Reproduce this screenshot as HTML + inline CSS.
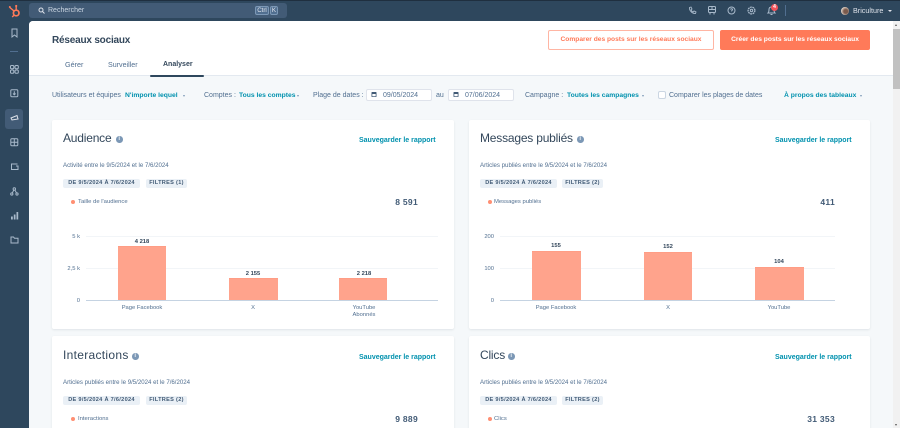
<!DOCTYPE html>
<html lang="fr"><head><meta charset="utf-8"><title>Réseaux sociaux</title>
<style>
html,body{margin:0;padding:0;width:900px;height:428px;overflow:hidden;background:#2e475d}
body{position:relative;font-family:"Liberation Sans",sans-serif;color:#33475b;filter:blur(.25px)}
*{box-sizing:border-box}
.a,.t{position:absolute}
.t{white-space:nowrap;line-height:10px;height:10px}
.c{transform:translateX(-50%)}
.r{transform:translateX(-100%)}
.link{color:#0091ae;font-weight:bold}
.lab{color:#516f90;font-size:7px}
.card{position:absolute;background:#fff;border-radius:2px;box-shadow:0 1px 2px rgba(45,62,80,.1);width:402px;height:209px}
.h{font-size:12px;color:#33475b;line-height:16px;height:16px;letter-spacing:-.2px}
.info{position:absolute;width:6.500px;height:6.500px;border-radius:50%;background:#7c98b6;color:#fff;font-size:5px;line-height:6.500px;text-align:center;font-weight:bold}
.tag{position:absolute;background:#eaf0f6;border-radius:2px;height:9px;font-size:5.600px;line-height:9px;font-weight:bold;color:#425b76;text-align:center;letter-spacing:.3px}
.dot{position:absolute;width:4px;height:4px;border-radius:50%;background:#ff8f73}
.bar{position:absolute;background:#ffa38c;border-top:1px solid #ff9d85}
.grid{position:absolute;height:1px;background:#f2f5f8}
.base{position:absolute;height:1px;background:#c5d3e2}
.num{font-weight:bold;font-size:5.800px;color:#33475b}
.ax{font-size:5.800px;color:#516f90}
.big{font-weight:bold;font-size:8.500px;color:#425b76;letter-spacing:.3px}
svg{position:absolute;overflow:visible}
.s{fill:none;stroke:#a9bacb;stroke-width:1}
.date{position:absolute;background:#fff;border:1px solid #dfe3eb;border-radius:2px;height:12px;width:66px}
.caret{position:absolute;width:0;height:0;border-left:1.600px solid transparent;border-right:1.600px solid transparent;border-top:2px solid #7c98b6}
.f{top:90.500px}
.f.lab{font-size:7px}
.f.link{font-size:6.750px}
</style></head><body>
<!-- top bar -->
<div class="a" style="left:0;top:0;width:900px;height:1px;background:#1f2f3f"></div>
<div class="a" style="left:29px;top:3px;width:258px;height:15px;background:#425b76;border-radius:3px"></div>
<svg style="left:38px;top:7px" width="8" height="8" viewBox="0 0 8 8"><circle cx="3" cy="3" r="2" fill="none" stroke="#dfe3eb" stroke-width="1"/><path d="M4.500 4.500L6.500 6.500" stroke="#dfe3eb" stroke-width="1"/></svg>
<div class="t" style="left:48px;top:6px;font-size:7px;color:#cbd6e2">Rechercher</div>
<div class="a" style="left:255px;top:6px;width:14px;height:9px;border:1px solid #7c98b6;border-radius:2px;background:#516f90;color:#dfe3eb;font-size:6.200px;line-height:7px;text-align:center">Ctrl</div>
<div class="a" style="left:270px;top:6px;width:8px;height:9px;border:1px solid #7c98b6;border-radius:2px;background:#516f90;color:#dfe3eb;font-size:6.200px;line-height:7px;text-align:center">K</div>
<!-- logo -->
<svg style="left:8px;top:4px" width="14" height="14" viewBox="0 0 14 14"><circle cx="8.200" cy="9" r="2.800" fill="none" stroke="#ff7a59" stroke-width="1.700"/><path d="M8.200 6V2.600M6 7L2 3.600M6.200 11L4.200 13" stroke="#ff7a59" stroke-width="1.400"/><circle cx="8.200" cy="2" r="1.100" fill="#ff7a59"/><circle cx="1.800" cy="3" r="1" fill="#ff7a59"/></svg>
<!-- right top icons -->
<svg style="left:688px;top:6px" width="9" height="9" viewBox="0 0 9 9"><path d="M1.500 1.500L3 1l1 2-1 .8c.4 1 1.200 1.800 2.200 2.200l.8-1 2 1-.5 1.500C4.500 8 1 4.500 1.500 1.500z" fill="none" stroke="#a9bacb" stroke-width=".9"/></svg>
<svg style="left:708px;top:6px" width="8" height="9" viewBox="0 0 8 9"><rect x=".5" y=".5" width="7" height="6" rx="1" class="s"/><path d="M.5 3.500H7.500M4 .5V3.500M2 7V8.500M6 7V8.500" class="s"/></svg>
<svg style="left:727px;top:6px" width="9" height="9" viewBox="0 0 9 9"><circle cx="4.500" cy="4.500" r="3.500" class="s"/><path d="M3.500 3.500C3.700 2.500 5.500 2.500 5.500 3.600 5.500 4.400 4.500 4.400 4.500 5.400" class="s" stroke-width=".8"/></svg>
<svg style="left:747px;top:6px" width="9" height="9" viewBox="0 0 9 9"><circle cx="4.500" cy="4.500" r="3.400" fill="none" stroke="#a9bacb" stroke-width="1.300" stroke-dasharray="1.800 .6"/><circle cx="4.500" cy="4.500" r="1.200" class="s" stroke-width=".9"/></svg>
<svg style="left:767px;top:6px" width="9" height="10" viewBox="0 0 9 10"><path d="M1 7c1-1 1-2 1-3.500C2 2 3 1 4.500 1S7 2 7 3.500C7 5 7 6 8 7zM3.500 8.500h2" class="s"/></svg>
<div class="a" style="left:771px;top:4px;width:7px;height:7px;border-radius:50%;background:#f2545b;color:#fff;font-size:5px;font-weight:bold;line-height:7px;text-align:center">4</div>
<div class="a" style="left:785px;top:5px;width:1px;height:11px;background:#516f90"></div>
<div class="a" style="left:841px;top:7px;width:8px;height:8px;border-radius:50%;background:radial-gradient(circle at 60% 55%,#7a5a4c 30%,#e3d5c8 70%)"></div>
<div class="t" style="left:853px;top:6px;font-size:7.200px;color:#dfe3eb">Briculture</div>
<div class="caret" style="left:888px;top:10px;border-left-width:2px;border-right-width:2px;border-top:2.500px solid #dfe3eb"></div>
<!-- sidebar icons -->
<svg style="left:10px;top:28px" width="9" height="10" viewBox="0 0 9 10"><path d="M2 1h5v8L4.500 7 2 9z" class="s"/></svg>
<div class="a" style="left:10px;top:51px;width:8px;height:1px;background:#516f90"></div>
<svg style="left:10px;top:65px" width="9" height="9" viewBox="0 0 9 9"><rect x=".5" y=".5" width="3.300" height="3.300" rx="1" class="s"/><rect x="5" y=".5" width="3.300" height="3.300" rx="1" class="s"/><rect x=".5" y="5" width="3.300" height="3.300" rx="1" class="s"/><rect x="5" y="5" width="3.300" height="3.300" rx="1" class="s"/></svg>
<svg style="left:10px;top:89px" width="9" height="9" viewBox="0 0 9 9"><rect x=".8" y=".8" width="7" height="7" rx="1" class="s"/><path d="M4.300 2.300V5.500M3 4.500L4.300 5.800 5.600 4.500" class="s" stroke-width=".8"/></svg>
<div class="a" style="left:5px;top:109px;width:18px;height:20px;background:#425b76;border-radius:3px"></div>
<svg style="left:10px;top:114px" width="9" height="8" viewBox="0 0 9 8"><path d="M1 4L7 1.500 8 5 2 6z" fill="none" stroke="#dfe3eb" stroke-width="1"/></svg>
<svg style="left:10px;top:138px" width="9" height="9" viewBox="0 0 9 9"><rect x=".8" y=".8" width="7" height="7" rx="1" class="s"/><path d="M.8 4.300H7.800M4.300 .8V7.800" class="s" stroke-width=".7"/></svg>
<svg style="left:10px;top:163px" width="9" height="8" viewBox="0 0 9 8"><path d="M7.500 1H1.500v5.500h6.500V3H6" class="s"/></svg>
<svg style="left:10px;top:187px" width="9" height="9" viewBox="0 0 9 9"><circle cx="4.300" cy="2" r="1.200" class="s"/><circle cx="1.800" cy="7" r="1.100" class="s"/><circle cx="7" cy="7" r="1.100" class="s"/><path d="M3.700 3.200L2.300 6M5 3.200L6.500 6" class="s" stroke-width=".8"/></svg>
<svg style="left:10px;top:211px" width="9" height="9" viewBox="0 0 9 9"><path d="M1 8.500V5.500H2.800V8.500M3.800 8.500V3.500H5.500V8.500M6.500 8.500V1H8.200V8.500" fill="#a9bacb"/></svg>
<svg style="left:10px;top:236px" width="9" height="8" viewBox="0 0 9 8"><path d="M1 1h2.500l1 1.200H8V7H1z" class="s"/></svg>
<!-- main -->
<div class="a" style="left:29px;top:21px;width:864px;height:407px;background:#f5f8fa;border-top-left-radius:4px"></div>
<div class="a" style="left:29px;top:21px;width:864px;height:55px;background:#fff;border-bottom:1px solid #e3e9f0;border-top-left-radius:4px"></div>
<div class="a" style="left:893px;top:21px;width:7px;height:407px;background:#f1f1f1"></div>
<div class="a" style="left:893px;top:29px;width:7px;height:60px;background:#c1c1c1"></div>
<div class="a" style="left:895px;top:24px;width:0;height:0;border-left:1.500px solid transparent;border-right:1.500px solid transparent;border-bottom:2px solid #555"></div>
<div class="a" style="left:895px;top:424px;width:0;height:0;border-left:1.500px solid transparent;border-right:1.500px solid transparent;border-top:2px solid #555"></div>

<div class="t" style="left:52px;top:34px;height:14px;line-height:14px;font-size:10px;font-weight:bold;color:#33475b;letter-spacing:-.2px">Réseaux sociaux</div>
<div class="t" style="left:65px;top:60px;font-size:7.200px;color:#516f90">Gérer</div>
<div class="t" style="left:108px;top:60px;font-size:7.100px;color:#516f90">Surveiller</div>
<div class="t" style="left:163px;top:60px;font-size:7px;font-weight:bold;color:#33475b">Analyser</div>
<div class="a" style="left:150px;top:75px;width:54px;height:2px;background:#2e475d;border-radius:1px"></div>

<div class="a" style="left:548px;top:30px;width:166px;height:20px;border:1px solid #ffb5a3;border-radius:2px;background:#fff;color:#ff7a59;font-size:6.650px;font-weight:bold;line-height:18px;text-align:center;white-space:nowrap">Comparer des posts sur les réseaux sociaux</div>
<div class="a" style="left:720px;top:30px;width:150px;height:20px;border-radius:2px;background:#ff7a59;color:#fff;font-size:6.700px;font-weight:bold;line-height:20px;text-align:center;white-space:nowrap">Créer des posts sur les réseaux sociaux</div>

<!-- filters -->
<div class="t lab f" style="left:52px">Utilisateurs et équipes</div>
<div class="t link f" style="left:125px">N'importe lequel</div>
<div class="caret" style="left:183px;top:94.500px"></div>
<div class="t lab f" style="left:204px">Comptes :</div>
<div class="t link f" style="left:239px">Tous les comptes</div>
<div class="caret" style="left:297px;top:94.500px"></div>
<div class="t lab f" style="left:313px">Plage de dates :</div>
<div class="date" style="left:366px;top:89px"></div>
<svg style="left:371px;top:91px" width="7" height="7" viewBox="0 0 7 7"><rect x=".5" y="1" width="5" height="5" rx=".6" fill="#425b76"/><rect x="1.300" y="3" width="3.400" height="2.300" fill="#fff"/></svg>
<div class="t lab f" style="left:383px">09/05/2024</div>
<div class="t lab f" style="left:436px">au</div>
<div class="date" style="left:448px;top:89px"></div>
<svg style="left:453px;top:91px" width="7" height="7" viewBox="0 0 7 7"><rect x=".5" y="1" width="5" height="5" rx=".6" fill="#425b76"/><rect x="1.300" y="3" width="3.400" height="2.300" fill="#fff"/></svg>
<div class="t lab f" style="left:465px">07/06/2024</div>
<div class="t lab f" style="left:525px">Campagne :</div>
<div class="t link f" style="left:567px">Toutes les campagnes</div>
<div class="caret" style="left:642px;top:94.500px"></div>
<div class="a" style="left:658px;top:91px;width:8px;height:8px;border:1px solid #cbd6e2;border-radius:2px;background:#fff"></div>
<div class="t lab f" style="left:669px">Comparer les plages de dates</div>
<div class="t link f" style="left:784px">À propos des tableaux</div>
<div class="caret" style="left:860px;top:94.500px"></div>

<!-- card 1 -->
<div class="card" style="left:52px;top:120px"></div>
<div class="t h" style="left:63px;top:130px">Audience</div>
<div class="info" style="left:116px;top:136px">i</div>
<div class="t link" style="left:359px;top:136px;font-size:7px">Sauvegarder le rapport</div>
<div class="t lab" style="left:63px;top:161px;font-size:6.100px">Activité entre le 9/5/2024 et le 7/6/2024</div>
<div class="tag" style="left:63px;top:179px;width:77px">DE 9/5/2024 À 7/6/2024</div>
<div class="tag" style="left:146px;top:179px;width:41px">FILTRES (1)</div>
<div class="dot" style="left:71px;top:200px"></div>
<div class="t lab" style="left:78px;top:197px;font-size:5.900px">Taille de l'audience</div>
<div class="t big r" style="left:418px;top:197px">8 591</div>
<div class="t ax r" style="left:80px;top:232px">5 k</div>
<div class="t ax r" style="left:80px;top:264px">2,5 k</div>
<div class="t ax r" style="left:80px;top:296px">0</div>
<div class="grid" style="left:86px;top:236px;width:352px"></div>
<div class="grid" style="left:86px;top:268px;width:352px"></div>
<div class="bar" style="left:118px;top:246px;width:48px;height:54px"></div>
<div class="bar" style="left:229px;top:278px;width:49px;height:22px"></div>
<div class="bar" style="left:339px;top:278px;width:48px;height:22px"></div>
<div class="base" style="left:86px;top:300px;width:352px"></div>
<div class="t num c" style="left:142px;top:237px">4 218</div>
<div class="t num c" style="left:253px;top:269px">2 155</div>
<div class="t num c" style="left:364px;top:269px">2 218</div>
<div class="t ax c" style="left:142px;top:303px">Page Facebook</div>
<div class="t ax c" style="left:253px;top:303px">X</div>
<div class="t ax c" style="left:364px;top:303px">YouTube</div>
<div class="t ax c" style="left:364px;top:310px">Abonnés</div>

<!-- card 2 -->
<div class="card" style="left:469px;top:120px;width:401px"></div>
<div class="t h" style="left:480px;top:130px">Messages publiés</div>
<div class="info" style="left:577px;top:136px">i</div>
<div class="t link" style="left:775px;top:136px;font-size:7px">Sauvegarder le rapport</div>
<div class="t lab" style="left:480px;top:161px;font-size:6.100px">Articles publiés entre le 9/5/2024 et le 7/6/2024</div>
<div class="tag" style="left:480px;top:179px;width:77px">DE 9/5/2024 À 7/6/2024</div>
<div class="tag" style="left:562px;top:179px;width:41px">FILTRES (2)</div>
<div class="dot" style="left:488px;top:200px"></div>
<div class="t lab" style="left:494px;top:197px;font-size:5.900px">Messages publiés</div>
<div class="t big r" style="left:835px;top:197px">411</div>
<div class="t ax r" style="left:494px;top:232px">200</div>
<div class="t ax r" style="left:494px;top:264px">100</div>
<div class="t ax r" style="left:494px;top:296px">0</div>
<div class="grid" style="left:500px;top:236px;width:335px"></div>
<div class="grid" style="left:500px;top:268px;width:335px"></div>
<div class="bar" style="left:532px;top:251px;width:49px;height:49px"></div>
<div class="bar" style="left:644px;top:252px;width:48px;height:48px"></div>
<div class="bar" style="left:755px;top:267px;width:49px;height:33px"></div>
<div class="base" style="left:500px;top:300px;width:335px"></div>
<div class="t num c" style="left:556px;top:241px">155</div>
<div class="t num c" style="left:668px;top:242px">152</div>
<div class="t num c" style="left:779px;top:257px">104</div>
<div class="t ax c" style="left:556px;top:303px">Page Facebook</div>
<div class="t ax c" style="left:668px;top:303px">X</div>
<div class="t ax c" style="left:779px;top:303px">YouTube</div>

<!-- card 3 -->
<div class="card" style="left:52px;top:336px;height:100px"></div>
<div class="t h" style="left:63px;top:347px;letter-spacing:.3px">Interactions</div>
<div class="info" style="left:132px;top:353px">i</div>
<div class="t link" style="left:359px;top:352.500px;font-size:7px">Sauvegarder le rapport</div>
<div class="t lab" style="left:63px;top:378px;font-size:6.100px">Articles publiés entre le 9/5/2024 et le 7/6/2024</div>
<div class="tag" style="left:63px;top:396px;width:77px">DE 9/5/2024 À 7/6/2024</div>
<div class="tag" style="left:146px;top:396px;width:41px">FILTRES (2)</div>
<div class="dot" style="left:71px;top:417px"></div>
<div class="t lab" style="left:78px;top:414px;font-size:5.900px">Interactions</div>
<div class="t big r" style="left:418px;top:414px">9 889</div>

<!-- card 4 -->
<div class="card" style="left:469px;top:336px;width:401px;height:100px"></div>
<div class="t h" style="left:480px;top:347px">Clics</div>
<div class="info" style="left:508px;top:353px">i</div>
<div class="t link" style="left:775px;top:352.500px;font-size:7px">Sauvegarder le rapport</div>
<div class="t lab" style="left:480px;top:378px;font-size:6.100px">Articles publiés entre le 9/5/2024 et le 7/6/2024</div>
<div class="tag" style="left:480px;top:396px;width:77px">DE 9/5/2024 À 7/6/2024</div>
<div class="tag" style="left:562px;top:396px;width:41px">FILTRES (2)</div>
<div class="dot" style="left:488px;top:417px"></div>
<div class="t lab" style="left:494px;top:414px;font-size:5.900px">Clics</div>
<div class="t big r" style="left:835px;top:414px">31 353</div>
</body></html>
